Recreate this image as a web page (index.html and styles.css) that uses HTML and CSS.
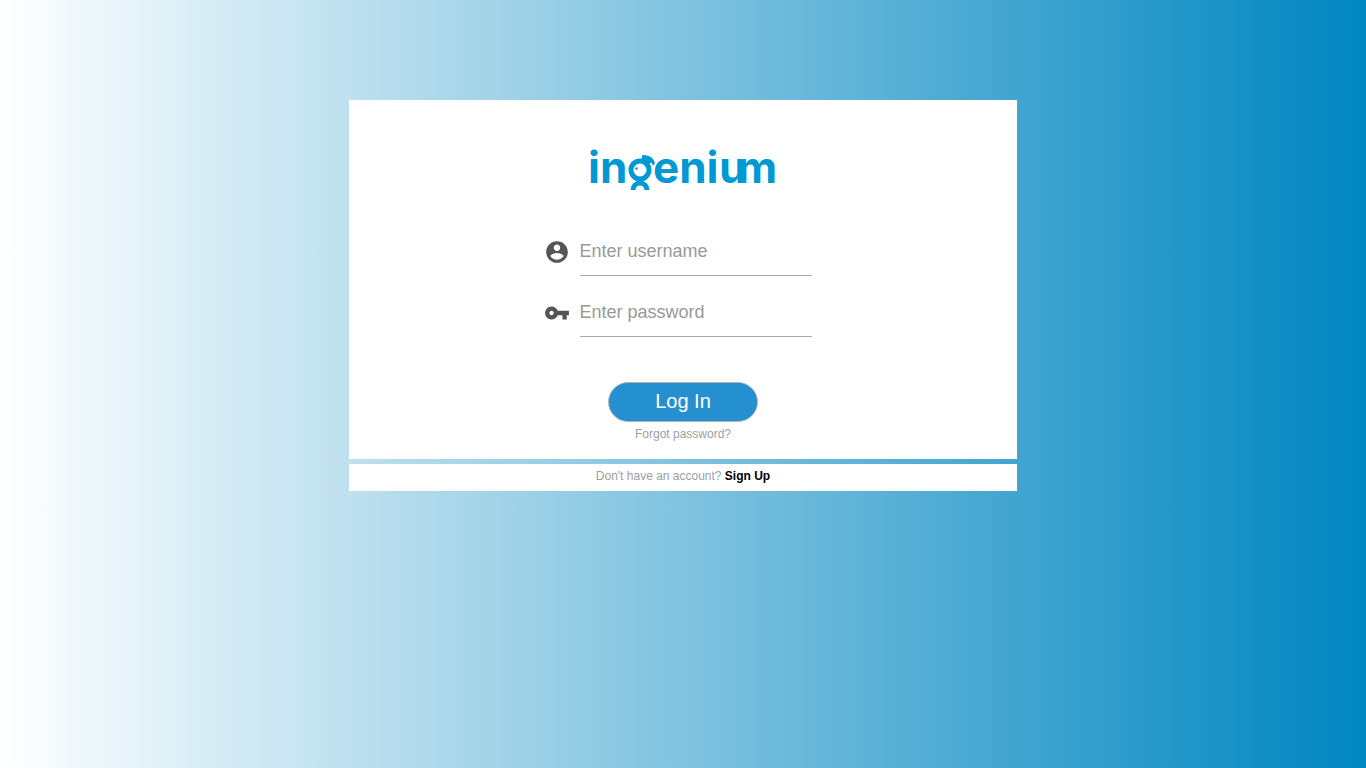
FILE: index.html
```html
<!DOCTYPE html>
<html lang="en">
<head>
<meta charset="utf-8">
<meta name="viewport" content="width=device-width, initial-scale=1">
<title>ingenium - Log In</title>
<link rel="stylesheet" href="styles.css">
</head>
<body>
<main class="page">
  <section class="card">
    <svg class="logo" viewBox="0 0 190 42" role="img" aria-label="ingenium">
      <g class="wordmark">
        <text x="0" y="34">in</text>
        <text x="65" y="34">eni</text>
        <text x="131" y="34">u</text>
        <text x="149" y="34">m</text>
      </g>
      <g class="mascot">
        <circle class="outline" cx="52" cy="21" r="9"/>
        <path class="outline" d="M45 41a7 7 0 0 1 14 0"/>
        <path d="M49 30h6v4h-6z"/>
        <path d="M54 6q8 0 11 4l2 4-2 3-1-3-2 0-2 3-4-5-4-1 2-2z"/>
        <circle cx="48.500" cy="19.500" r="1.300"/>
      </g>
    </svg>
    <form class="login">
      <div class="field">
        <label for="username" aria-label="Username">
          <svg class="icon" viewBox="0 0 24 24" aria-hidden="true"><path d="M12 2C6.480 2 2 6.480 2 12s4.480 10 10 10 10-4.480 10-10S17.520 2 12 2zm0 3c1.660 0 3 1.340 3 3s-1.340 3-3 3-3-1.340-3-3 1.340-3 3-3zm0 14.200c-2.500 0-4.710-1.280-6-3.220.030-1.990 4-3.080 6-3.080 1.990 0 5.970 1.090 6 3.080-1.290 1.940-3.500 3.220-6 3.220z"/></svg>
        </label>
        <input id="username" type="text" placeholder="Enter username">
      </div>
      <div class="field">
        <label for="password" aria-label="Password">
          <svg class="icon" viewBox="0 0 24 24" aria-hidden="true"><path d="M12.650 10C11.830 7.670 9.610 6 7 6c-3.310 0-6 2.690-6 6s2.690 6 6 6c2.610 0 4.830-1.670 5.650-4H17v4h4v-4h2v-4H12.650zM7 14c-1.100 0-2-.9-2-2s.9-2 2-2 2 .9 2 2-.9 2-2 2z"/></svg>
        </label>
        <input id="password" type="password" placeholder="Enter password">
      </div>
      <button class="submit" type="submit">Log In</button>
      <a class="forgot" href="#">Forgot password?</a>
    </form>
  </section>
  <p class="signup">Don't have an account? <a href="#">Sign Up</a></p>
</main>
</body>
</html>
```
FILE: styles.css
```css
* { box-sizing: border-box; }

body {
  min-height: 100vh;
  margin: 0;
  font-family: "Liberation Sans", Arial, sans-serif;
  font-size: 12px;
  line-height: 14px;
  color: #9e9e9e;
  background: linear-gradient(to right, #fff, #0086c0);
}

.page {
  display: flex;
  flex-direction: column;
  gap: 5px;
  max-width: 668px;
  margin: 0 auto;
  padding: 100px 0;
}

.card {
  display: flex;
  flex-direction: column;
  align-items: center;
  padding: 49px 20px 18px;
  background: #fff;
}

.logo {
  width: 190px;
  height: 42px;
  overflow: visible;
}

.wordmark {
  font-family: Inter, sans-serif;
  font-size: 44px;
  font-weight: 700;
  fill: #0099d3;
}

.mascot { fill: #0099d3; }

.outline {
  fill: none;
  stroke: #0099d3;
  stroke-width: 5;
}

.login {
  display: flex;
  flex-direction: column;
  align-items: center;
  margin-top: 35px;
}

.field {
  display: flex;
  align-items: center;
  gap: 10px;
  margin: 0 11px 11px 0;
}

.field label {
  display: flex;
  padding-top: 2px;
}

.icon {
  width: 26px;
  height: 26px;
  fill: #555;
}

.field input {
  width: 232px;
  height: 50px;
  padding: 2px 0 0;
  border: 0;
  border-bottom: 1px solid #a9a9a9;
  background: transparent;
  font: 18px "Liberation Sans", Arial, sans-serif;
  color: #444;
}

.field input::placeholder { color: #999; }

.submit {
  width: 150px;
  height: 40px;
  margin-top: 34px;
  padding: 0 0 2px;
  border: 1px solid #b5b5b5;
  border-radius: 20px;
  background: #2590d0;
  color: #fff;
  font: 20px "Liberation Sans", Arial, sans-serif;
}

.forgot {
  margin-top: 5px;
  color: #9e9e9e;
  text-decoration: none;
}

.signup {
  margin: 0;
  padding: 5px 0 8px;
  background: #fff;
  text-align: center;
}

.signup a {
  color: #000;
  font-weight: 700;
  text-decoration: none;
}
```
